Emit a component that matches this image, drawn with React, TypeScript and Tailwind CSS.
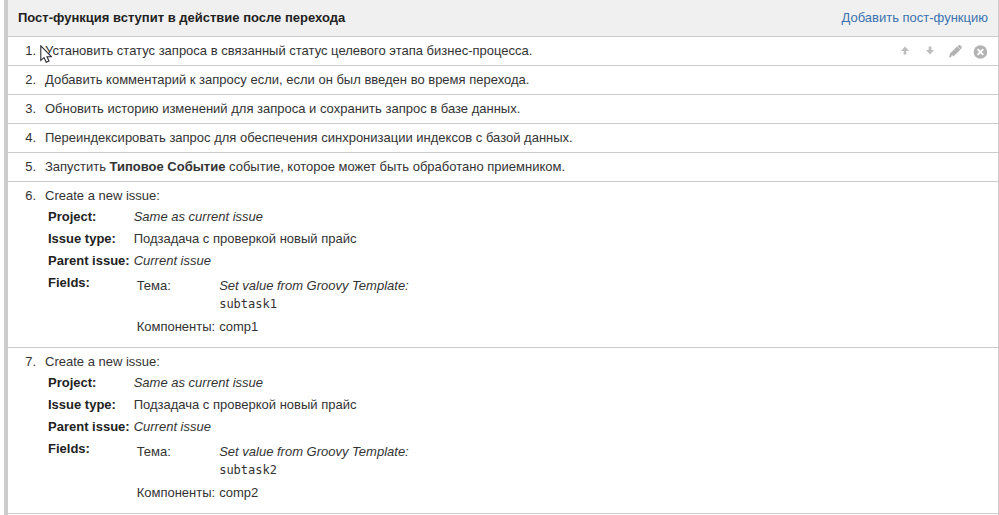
import type { ReactNode } from "react";

type Issue = {
  fields: { theme: string; component: string };
};

const issues: Issue[] = [
  { fields: { theme: "subtask1", component: "comp1" } },
  { fields: { theme: "subtask2", component: "comp2" } },
];

const steps: ReactNode[] = [
  "Установить статус запроса в связанный статус целевого этапа бизнес-процесса.",
  "Добавить комментарий к запросу если, если он был введен во время перехода.",
  "Обновить историю изменений для запроса и сохранить запрос в базе данных.",
  "Переиндексировать запрос для обеспечения синхронизации индексов с базой данных.",
  <>
    Запустить <strong>Типовое Событие</strong> событие, которое может быть обработано приемником.
  </>,
];

function RowActions() {
  return (
    <div className="flex items-center gap-[9px] text-[#b3b3b3]">
      <button type="button" aria-label="Вверх" className="h-4 w-4">
        <svg viewBox="0 0 16 16" className="h-4 w-4" fill="#bdbdbd">
          <path d="M8 3.4 L12 7.9 H9.3 V11.4 H6.7 V7.9 H4 Z" />
        </svg>
      </button>
      <button type="button" aria-label="Вниз" className="h-4 w-4">
        <svg viewBox="0 0 16 16" className="h-4 w-4" fill="#bdbdbd">
          <path d="M8 11.4 L4 6.9 H6.7 V3.4 H9.3 V6.9 H12 Z" />
        </svg>
      </button>
      <button type="button" aria-label="Изменить" className="h-4 w-4">
        <svg viewBox="0 0 16 16" className="h-4 w-4" fill="currentColor">
          <path d="M11 2.7 Q12.5 1.4 14 2.8 Q15.5 4.3 14.2 5.8 L13.6 6.4 L10.4 3.2 Z" />
          <path d="M10.1 3.4 L13.3 6.7 L6.4 13.5 L5.1 12.1 L3.9 14.2 L2 14.6 L3 10.4 Z" />
        </svg>
      </button>
      <button type="button" aria-label="Удалить" className="h-4 w-4">
        <svg viewBox="0 0 16 16" className="h-4 w-4">
          <circle cx="8.4" cy="9" r="6.8" fill="currentColor" />
          <path d="M5.6 6.2 L11.2 11.8 M11.2 6.2 L5.6 11.8" stroke="#fff" strokeWidth="1.9" />
        </svg>
      </button>
    </div>
  );
}

function Cursor() {
  return (
    <svg viewBox="0 0 12 18" className="absolute -left-[5px] top-1 h-[18px] w-3" aria-hidden="true">
      <path
        d="M0.8 0.8 V15.4 L4.1 12.6 L6.2 17.2 L9 16 L7 11.7 H11.4 Z"
        fill="#fff"
        stroke="#2b2b35"
        strokeWidth="1.1"
      />
    </svg>
  );
}

function Row({ number, children }: { number: number; children: ReactNode }) {
  return (
    <li className="flex border-b border-[#ccc] py-1 pr-2.5">
      <span className="w-7 shrink-0 text-right">{number}.</span>
      <div className="flex flex-1 justify-between pl-[9px]">{children}</div>
    </li>
  );
}

function IssueDetails({ fields }: Issue) {
  return (
    <div>
      <p>Create a new issue:</p>
      <table className="mb-1 ml-[3px] leading-[22px]">
        <tbody>
          <tr>
            <th scope="row" className="pr-1 text-left font-bold text-[#222]">Project:</th>
            <td className="italic">Same as current issue</td>
          </tr>
          <tr>
            <th scope="row" className="pr-1 text-left font-bold text-[#222]">Issue type:</th>
            <td>Подзадача с проверкой новый прайс</td>
          </tr>
          <tr>
            <th scope="row" className="pr-1 text-left font-bold text-[#222]">Parent issue:</th>
            <td className="italic">Current issue</td>
          </tr>
          <tr className="align-top">
            <th scope="row" className="pr-1 text-left font-bold text-[#222]">Fields:</th>
            <td>
              <table className="ml-[3px] mt-[3px] leading-[18px]">
                <tbody>
                  <tr className="align-top">
                    <td className="pb-[3px] pr-1 pt-0.5">Тема:</td>
                    <td className="pb-[3px] pt-0.5">
                      <em>Set value from Groovy Template:</em>
                      <pre className="font-['DejaVu_Sans_Mono',monospace] text-[12px] leading-[18px]">
                        {fields.theme}
                      </pre>
                    </td>
                  </tr>
                  <tr>
                    <td className="pb-[3px] pr-1 pt-0.5">Компоненты:</td>
                    <td className="pb-[3px] pt-0.5">{fields.component}</td>
                  </tr>
                </tbody>
              </table>
            </td>
          </tr>
        </tbody>
      </table>
    </div>
  );
}

export default function App() {
  return (
    <main className="bg-white pl-1 font-['Liberation_Sans',Arial,sans-serif] text-[13px] leading-5 text-[#333]">
      <section className="border-l-4 border-r border-l-[#ccc] border-r-[#ccc] pb-1">
        <header className="flex items-center justify-between border-b border-[#ccc] bg-[#f0f0f0] py-2 pl-2.5 pr-2.5">
          <h2 className="font-bold text-[#222]">Пост-функция вступит в действие после перехода</h2>
          <a href="#add" className="text-[#3b73af]">
            Добавить пост-функцию
          </a>
        </header>
        <ol>
          {steps.map((step, i) => (
            <Row key={i} number={i + 1}>
              <p className="relative">
                {step}
                {i === 0 && <Cursor />}
              </p>
              {i === 0 && <RowActions />}
            </Row>
          ))}
          {issues.map((issue, i) => (
            <Row key={i} number={steps.length + i + 1}>
              <IssueDetails {...issue} />
            </Row>
          ))}
        </ol>
      </section>
    </main>
  );
}
